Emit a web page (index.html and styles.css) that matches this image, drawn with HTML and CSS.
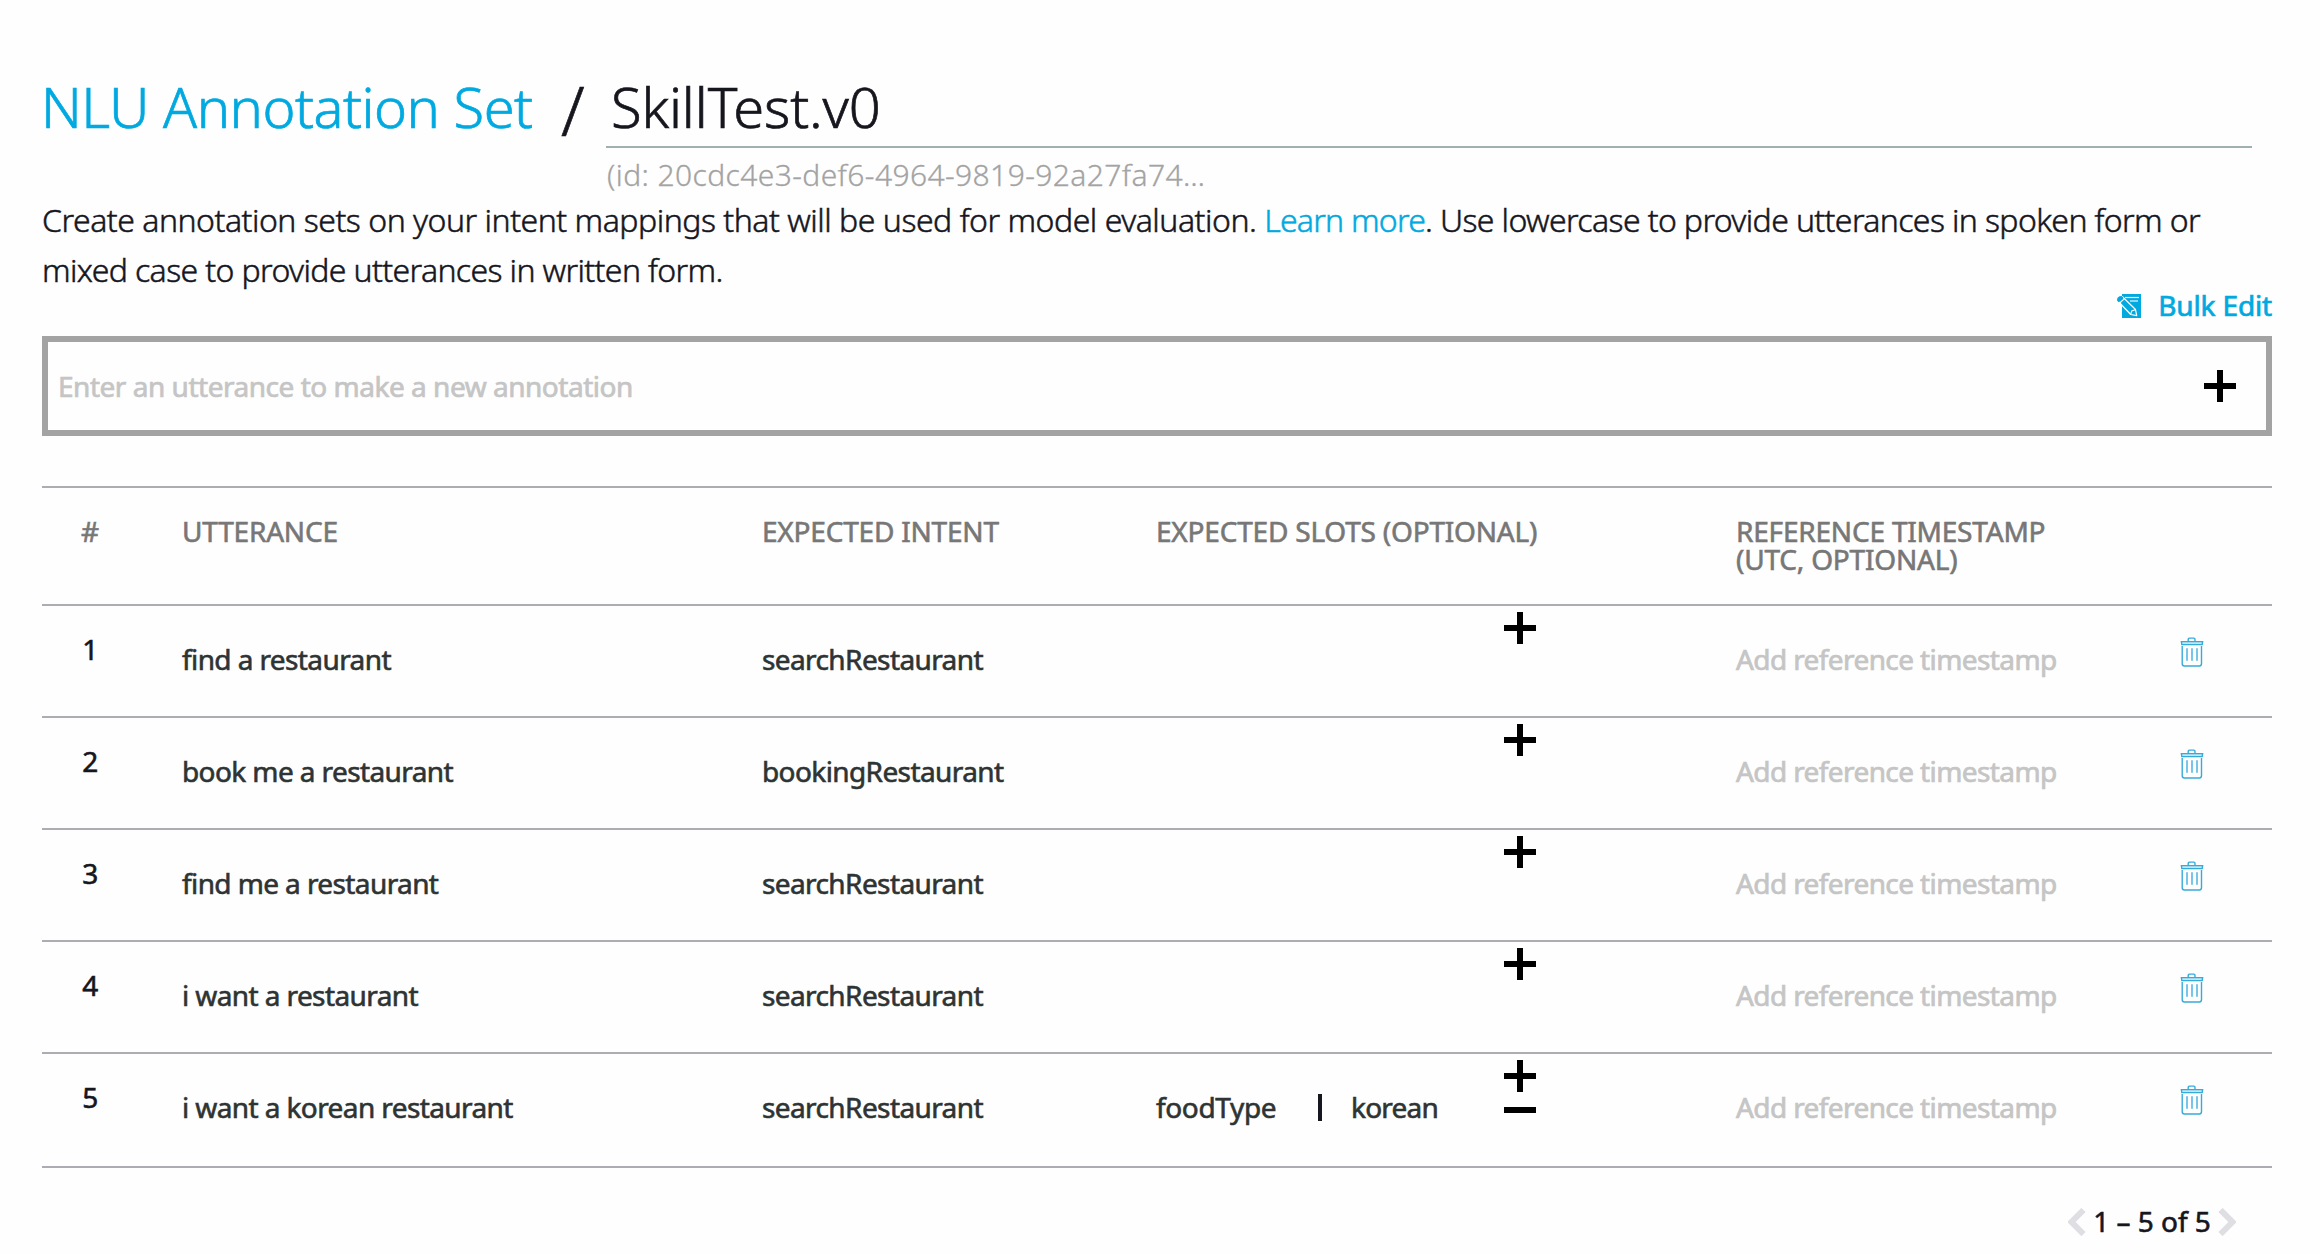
FILE: index.html
```
<!DOCTYPE html>
<html lang="en">
<head>
<meta charset="utf-8">
<title>NLU Annotation Set</title>
<link rel="stylesheet" href="styles.css">
</head>
<body>
<svg class="defs" aria-hidden="true">
  <symbol id="plus" viewBox="0 0 32 32"><path d="M13 0h6v13h13v6H19v13h-6V19H0v-6h13z"/></symbol>
  <symbol id="minus" viewBox="0 0 32 6"><path d="M0 0h32v6H0z"/></symbol>
  <symbol id="trash" viewBox="0 0 24 30">
    <path d="M1 4.600h22v3H1z" fill="#c3e6f5"/>
    <path d="M8.200 4.200V2.400q0-1.300 1.300-1.300h4.200q1.300 0 1.300 1.300v1.800M1.400 4.600h21.200l-.4 3H1.800zM2.200 9v17.500q0 2.500 2.200 2.500h14.900q2.200 0 2.200-2.500V9" fill="none" stroke="#36aadc" stroke-width="1.400"/>
    <path d="M7 11.200v12.600M12 11.200v12.600M17 11.200v12.600" stroke="#4bb2df" stroke-width="1.500"/>
  </symbol>
</svg>
<main class="page">
  <header class="title">
    <a class="title-link">NLU Annotation Set</a>
    <span class="slash">/</span>
    <div class="title-name">SkillTest.v0</div>
  </header>
  <div class="set-id">(id: 20cdc4e3-def6-4964-9819-92a27fa74…</div>
  <p class="intro">Create annotation sets on your intent mappings that will be used for model evaluation. <a>Learn more</a><span class="tail">. Use lowercase to provide utterances in spoken form or<br>mixed case to provide utterances in written form.</span></p>
  <div class="bulk">
    <svg class="bulk-icon" viewBox="0 0 24 24">
      <path d="M5 0h19v24H5z" fill="#00a9e0"/>
      <path d="M8 3.500h14" stroke="#fff" stroke-width="1.200"/>
      <path d="M13 7h8" stroke="#8fd6f0" stroke-width="2"/>
      <path d="M1 7l4.500-4.300L18.500 15.500l1.200 6.200-6-1.200z" fill="#00a9e0" stroke="#fff" stroke-width="1.200" stroke-linejoin="round"/>
      <path d="M0 6.500Q-.2 2 4.600 2L6.500 3.700 1.700 8.200z" fill="#00a9e0"/>
      <path d="M2.700 9l5-4.700M13.700 20.300l1-3.300 3.600-1.300" fill="none" stroke="#fff" stroke-width="1.100"/>
    </svg>
    <span>Bulk Edit</span>
  </div>
  <div class="entry">
    <span class="placeholder">Enter an utterance to make a new annotation</span>
    <svg class="plus"><use href="#plus"/></svg>
  </div>
  <section class="table">
    <div class="row head">
      <div class="num">#</div><div class="utt">UTTERANCE</div><div>EXPECTED INTENT</div><div>EXPECTED SLOTS (OPTIONAL)</div><div>REFERENCE TIMESTAMP<br>(UTC, OPTIONAL)</div>
    </div>
    <div class="row">
      <div class="num">1</div><div class="utt">find a restaurant</div><div>searchRestaurant</div>
      <div class="slots"><div class="tools"><svg class="plus"><use href="#plus"/></svg></div></div>
      <div class="stamp">Add reference timestamp</div><svg class="trash"><use href="#trash"/></svg>
    </div>
    <div class="row">
      <div class="num">2</div><div class="utt">book me a restaurant</div><div>bookingRestaurant</div>
      <div class="slots"><div class="tools"><svg class="plus"><use href="#plus"/></svg></div></div>
      <div class="stamp">Add reference timestamp</div><svg class="trash"><use href="#trash"/></svg>
    </div>
    <div class="row">
      <div class="num">3</div><div class="utt">find me a restaurant</div><div>searchRestaurant</div>
      <div class="slots"><div class="tools"><svg class="plus"><use href="#plus"/></svg></div></div>
      <div class="stamp">Add reference timestamp</div><svg class="trash"><use href="#trash"/></svg>
    </div>
    <div class="row">
      <div class="num">4</div><div class="utt">i want a restaurant</div><div>searchRestaurant</div>
      <div class="slots"><div class="tools"><svg class="plus"><use href="#plus"/></svg></div></div>
      <div class="stamp">Add reference timestamp</div><svg class="trash"><use href="#trash"/></svg>
    </div>
    <div class="row last">
      <div class="num">5</div><div class="utt">i want a korean restaurant</div><div>searchRestaurant</div>
      <div class="slots"><span class="slot-name">foodType</span><i class="bar"></i><span class="slot-value">korean</span><div class="tools"><svg class="plus"><use href="#plus"/></svg><svg class="minus"><use href="#minus"/></svg></div></div>
      <div class="stamp">Add reference timestamp</div><svg class="trash"><use href="#trash"/></svg>
    </div>
  </section>
  <nav class="pager">
    <svg viewBox="0 0 18 28"><path d="M15.500 2L3.500 14l12 12"/></svg>
    <span>1 – 5 of 5</span>
    <svg viewBox="0 0 18 28"><path d="M2.500 2l12 12-12 12"/></svg>
  </nav>
</main>
</body>
</html>
```
FILE: styles.css
```
* { box-sizing: border-box; }
body {
  margin: 0;
  background: #fefefe;
  color: #16161e;
  font: 400 28px/36px "Noto Sans", "Open Sans", sans-serif;
}
svg { display: block; flex: none; }
.defs { display: none; }
.page { width: 2272px; padding: 66px 0 0 42px; }

.title {
  display: flex;
  height: 82px;
  font-size: 56px;
  line-height: 80px;
  font-weight: 300;
  -webkit-text-stroke: .7px currentColor;
}
.title-link { width: 520px; margin-left: -1px; letter-spacing: -.5px; color: #00a9e0; }
.slash { width: 45px; font-size: 68px; line-height: 87px; }
.title-name {
  flex: none;
  width: 1646px;
  padding-left: 5px;
  border-bottom: 2px solid #a0b0b0;
  letter-spacing: -.15px;
}
.set-id {
  height: 47px;
  padding: 3px 0 0 565px;
  font-size: 30px;
  line-height: 47px;
  font-weight: 300;
  letter-spacing: .4px;
  color: #a3a3a3;
  -webkit-text-stroke: .3px currentColor;
}
.intro {
  margin: 0;
  height: 99px;
  font-size: 32px;
  line-height: 50px;
  font-weight: 300;
  letter-spacing: -.48px;
  white-space: nowrap;
  -webkit-text-stroke: .5px currentColor;
}
.intro a { letter-spacing: -.75px; color: #00a9e0; }
.tail { letter-spacing: -.62px; }

.bulk {
  display: flex;
  height: 42px;
  justify-content: flex-end;
  gap: 17px;
  line-height: 22px;
  letter-spacing: -.15px;
  color: #00a9e0;
  -webkit-text-stroke: .7px currentColor;
}
.bulk-icon { width: 24px; height: 24px; overflow: visible; }
.entry {
  display: flex;
  align-items: center;
  justify-content: space-between;
  height: 100px;
  padding: 0 30px 0 10px;
  border: 6px solid #a3a3a3;
}
.placeholder { padding-bottom: 1px; letter-spacing: -.48px; }
.plus { width: 32px; height: 32px; }
.minus { width: 32px; height: 6px; }

.table { margin-top: 50px; border-top: 2px solid #adacb3; }
.row {
  display: grid;
  grid-template-columns: 96px 624px 394px 580px 444px 24px;
  height: 112px;
  padding-top: 35px;
  border-bottom: 2px solid #adacb3;
  color: #2e3333;
  letter-spacing: -.6px;
  -webkit-text-stroke: .6px currentColor;
}
.placeholder, .stamp { color: #c5c5c5; -webkit-text-stroke: .7px currentColor; }
.last { height: 114px; }
.utt { padding-left: 44px; }
.num { margin-top: -10px; text-align: center; color: #16161e; }
.head {
  height: 118px;
  padding-top: 29px;
  line-height: 28px;
  color: #777;
  letter-spacing: -.2px;
}
.head .num { margin-top: 0; color: inherit; }
.slots { display: flex; }
.slot-name { width: 162px; letter-spacing: -.35px; }
.bar { width: 4px; height: 27px; margin-top: 5px; background: #16161e; }
.slot-value { padding-left: 29px; letter-spacing: -.8px; }
.tools {
  display: flex;
  flex-direction: column;
  gap: 15px;
  margin: -29px 200px 0 auto;
}
.trash { width: 24px; height: 30px; margin-top: -4px; }

.pager {
  display: flex;
  justify-content: flex-end;
  align-items: flex-start;
  padding: 35px 36px 0 0;
  line-height: 36px;
  -webkit-text-stroke: .6px currentColor;
}
.pager span { width: 132px; text-align: center; }
.pager svg { width: 18px; height: 28px; margin-top: 5px; fill: none; stroke: #dedee3; stroke-width: 6; }
```
